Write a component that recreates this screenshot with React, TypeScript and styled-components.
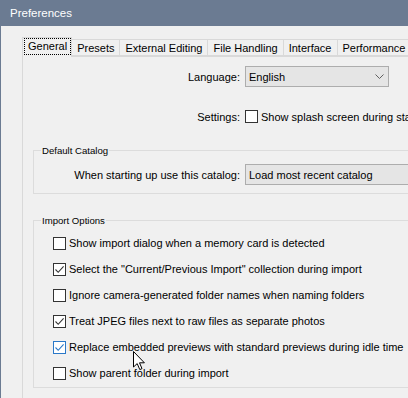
import styled, { createGlobalStyle } from "styled-components";

const GlobalStyle = createGlobalStyle`
  html, body {
    margin: 0;
    padding: 0;
    background: #f0f0f0;
    overflow: hidden;
  }
  body {
    font-family: "Liberation Sans", Arial, sans-serif;
    font-size: 11px;
    color: #000;
  }
`;

const tabs = [
  "General",
  "Presets",
  "External Editing",
  "File Handling",
  "Interface",
  "Performance",
];

const importOptions = [
  { text: "Show import dialog when a memory card is detected", checked: false },
  { text: 'Select the "Current/Previous Import" collection during import', checked: true },
  { text: "Ignore camera-generated folder names when naming folders", checked: false },
  { text: "Treat JPEG files next to raw files as separate photos", checked: true },
  { text: "Replace embedded previews with standard previews during idle time", checked: true, hover: true },
  { text: "Show parent folder during import", checked: false },
];

function CheckBox({ checked, hover }: { checked?: boolean; hover?: boolean }) {
  return (
    <STBox $hover={hover}>
      {checked && (
        <svg width="11" height="11" viewBox="0 0 11 11">
          <path
            d="M1.5 5.5 L4.2 8.3 L9.6 2.3"
            fill="none"
            stroke={hover ? "#2a78c8" : "#333"}
            strokeWidth="1.1"
          />
        </svg>
      )}
    </STBox>
  );
}

function Chevron() {
  return (
    <svg width="9" height="5" viewBox="0 0 9 5">
      <path d="M0.5 0.5 L4.5 4.5 L8.5 0.5" fill="none" stroke="#606060" strokeWidth="1" />
    </svg>
  );
}

function App() {
  return (
    <>
      <GlobalStyle />
      <STWindow>
        <STTitleBar>Preferences</STTitleBar>
        <STContent>
          <STTabStrip>
            {tabs.map((tab, i) => (
              <STTab key={tab} $active={i === 0}>
                {i === 0 ? <STFocus>{tab}</STFocus> : tab}
              </STTab>
            ))}
          </STTabStrip>
          <STPanel>
            <STFormRow $labelWidth={217}>
              <STLabel>Language:</STLabel>
              <STSelect $width={144}>
                <span>English</span>
                <Chevron />
              </STSelect>
            </STFormRow>
            <STFormRow $labelWidth={217} $top={19}>
              <STLabel>Settings:</STLabel>
              <STCheckRow>
                <CheckBox />
                <span>Show splash screen during startup</span>
              </STCheckRow>
            </STFormRow>

            <STGroup $top={23}>
              <STLegend>Default Catalog</STLegend>
              <STGroupBody $padTop={13} $padBottom={8}>
                <STFormRow $labelWidth={206}>
                  <STLabel>When starting up use this catalog:</STLabel>
                  <STSelect $width={260}>
                    <span>Load most recent catalog</span>
                  </STSelect>
                </STFormRow>
              </STGroupBody>
            </STGroup>

            <STGroup $top={26}>
              <STLegend>Import Options</STLegend>
              <STGroupBody $padTop={9} $padBottom={1} $padLeft={19}>
                {importOptions.map((opt) => (
                  <STOptionRow key={opt.text}>
                    <CheckBox checked={opt.checked} hover={opt.hover} />
                    <span>{opt.text}</span>
                  </STOptionRow>
                ))}
              </STGroupBody>
            </STGroup>
          </STPanel>
        </STContent>
        <STCursor width="13" height="20" viewBox="0 0 13 20">
          <path
            d="M0.5 0.5 L0.5 16 L4.2 12.6 L6.8 18.6 L9 17.6 L6.5 11.8 L11.4 11.8 Z"
            fill="#fff"
            stroke="#000"
            strokeWidth="1"
            strokeLinejoin="round"
          />
        </STCursor>
      </STWindow>
    </>
  );
}

const STWindow = styled.div`
  position: relative;
  width: 408px;
  height: 398px;
  border-left: 1px solid #6b7b92;
  box-sizing: border-box;
  overflow: hidden;
  background: #f0f0f0;
`;

const STTitleBar = styled.div`
  height: 26px;
  display: flex;
  align-items: center;
  padding-left: 9px;
  background: #6b7b92;
  color: #fff;
  font-size: 11.5px;
`;

const STContent = styled.div`
  padding: 11px 0 0 21px;
`;

const STTabStrip = styled.div`
  display: flex;
  align-items: flex-end;
  height: 19px;
  white-space: nowrap;
`;

const STTab = styled.div<{ $active?: boolean }>`
  box-sizing: border-box;
  height: ${(p) => (p.$active ? "20px" : "17px")};
  margin-bottom: ${(p) => (p.$active ? "-1px" : "0")};
  padding: ${(p) => (p.$active ? "1px 1px 0 2px" : "1px 5px 0 5px")};
  border: 1px solid #d9d9d9;
  border-bottom: ${(p) => (p.$active ? "none" : "1px solid #d9d9d9")};
  border-left: ${(p) => (p.$active ? "1px solid #d9d9d9" : "none")};
  background: #f0f0f0;
  display: flex;
  align-items: ${(p) => (p.$active ? "flex-start" : "center")};
  position: relative;
  z-index: ${(p) => (p.$active ? 1 : 0)};
`;

const STFocus = styled.span`
  display: block;
  outline: 1px dotted #000;
  padding: 1px 3px 2px 3px;
  line-height: 12px;
`;

const STPanel = styled.div`
  width: 700px;
  height: 400px;
  border-top: 1px solid #d9d9d9;
  border-left: 1px solid #d9d9d9;
  padding-top: 9px;
`;

const STFormRow = styled.div<{ $labelWidth: number; $top?: number }>`
  display: grid;
  grid-template-columns: ${(p) => p.$labelWidth}px auto;
  column-gap: 5px;
  align-items: center;
  height: 21px;
  margin-top: ${(p) => p.$top ?? 0}px;
  white-space: nowrap;
`;

const STLabel = styled.span`
  text-align: right;
`;

const STSelect = styled.div<{ $width: number }>`
  box-sizing: border-box;
  width: ${(p) => p.$width}px;
  height: 21px;
  display: flex;
  align-items: center;
  justify-content: space-between;
  padding: 0 4px 0 3px;
  background: #e5e5e5;
  border: 1px solid #adadad;
`;

const STCheckRow = styled.div`
  display: flex;
  align-items: center;
  gap: 3px;
`;

const STBox = styled.div<{ $hover?: boolean }>`
  box-sizing: border-box;
  width: 13px;
  height: 13px;
  flex: none;
  display: flex;
  align-items: center;
  justify-content: center;
  background: #fff;
  border: 1px solid ${(p) => (p.$hover ? "#2a78c8" : "#333")};
`;

const STGroup = styled.div<{ $top: number }>`
  position: relative;
  margin: ${(p) => p.$top}px 0 0 10px;
  border: 1px solid #dcdcdc;
  width: 640px;
`;

const STLegend = styled.span`
  position: absolute;
  top: -7px;
  left: 7px;
  padding: 0 1px;
  background: #f0f0f0;
  font-size: 9.6px;
  line-height: 13px;
`;

const STGroupBody = styled.div<{ $padTop: number; $padBottom: number; $padLeft?: number }>`
  padding: ${(p) => `${p.$padTop}px 0 ${p.$padBottom}px ${p.$padLeft ?? 0}px`};
`;

const STOptionRow = styled.div`
  display: flex;
  align-items: center;
  gap: 3px;
  height: 26px;
  white-space: nowrap;
`;

const STCursor = styled.svg`
  position: absolute;
  left: 132px;
  top: 351px;
`;

export default App;
